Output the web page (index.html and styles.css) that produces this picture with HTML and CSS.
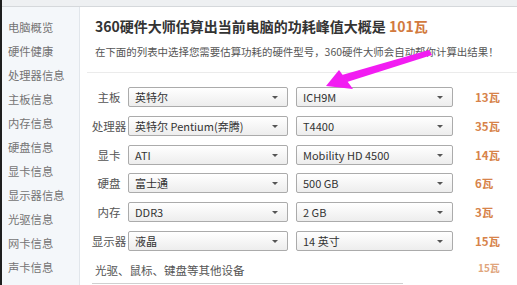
FILE: index.html
```html
<!DOCTYPE html>
<html lang="zh">
<head>
<meta charset="utf-8">
<link rel="stylesheet" href="styles.css">
</head>
<body>
<div class="frame">
  <div class="topbar"></div>
  <div class="layout">
    <ul class="sidebar">
      <li>电脑概览</li>
      <li>硬件健康</li>
      <li>处理器信息</li>
      <li>主板信息</li>
      <li>内存信息</li>
      <li>硬盘信息</li>
      <li>显卡信息</li>
      <li>显示器信息</li>
      <li>光驱信息</li>
      <li>网卡信息</li>
      <li>声卡信息</li>
    </ul>
    <main class="main">
      <header class="header">
        <h1 class="title">360硬件大师估算出当前电脑的功耗峰值大概是 <span class="hl">101瓦</span></h1>
        <p class="subtitle">在下面的列表中选择您需要估算功耗的硬件型号，360硬件大师会自动帮你计算出结果！</p>
      </header>
      <div class="rows">
        <div class="row"><span class="label">主板</span><div class="sel s1">英特尔<i class="caret"></i></div><div class="sel s2">ICH9M<i class="caret"></i></div><span class="val">13瓦</span></div>
        <div class="row"><span class="label">处理器</span><div class="sel s1">英特尔 Pentium(奔腾)<i class="caret"></i></div><div class="sel s2">T4400<i class="caret"></i></div><span class="val">35瓦</span></div>
        <div class="row"><span class="label">显卡</span><div class="sel s1">ATI<i class="caret"></i></div><div class="sel s2">Mobility HD 4500<i class="caret"></i></div><span class="val">14瓦</span></div>
        <div class="row"><span class="label">硬盘</span><div class="sel s1">富士通<i class="caret"></i></div><div class="sel s2">500 GB<i class="caret"></i></div><span class="val">6瓦</span></div>
        <div class="row"><span class="label">内存</span><div class="sel s1">DDR3<i class="caret"></i></div><div class="sel s2">2 GB<i class="caret"></i></div><span class="val">3瓦</span></div>
        <div class="row"><span class="label">显示器</span><div class="sel s1">液晶<i class="caret"></i></div><div class="sel s2">14 英寸<i class="caret"></i></div><span class="val">15瓦</span></div>
        <div class="row other"><span class="other-label">光驱、鼠标、键盘等其他设备</span><span class="val small">15瓦</span></div>
        <div class="inputline"></div>
      </div>
      <svg class="arrow" width="517" height="285" viewBox="0 0 517 285">
        <polygon points="429,50 432,55 347,82 342,75" fill="#f21cf2"/>
        <polygon points="326,86 339,70 353,89" fill="#f21cf2"/>
      </svg>
    </main>
  </div>
</div>
</body>
</html>
```
FILE: styles.css
```css
html, body {
  margin: 0;
  padding: 0;
}
body {
  width: 517px;
  height: 285px;
  overflow: hidden;
  background: #fff;
  font-family: "Noto Sans CJK SC", "Noto Sans", sans-serif;
}
.frame {
  height: 285px;
  border-left: 2px solid #1e1e1e;
  display: flex;
  flex-direction: column;
}
.topbar {
  height: 6px;
  background: #eef0f2;
  border-bottom: 1px solid #d5d8db;
  flex: none;
}
.layout {
  flex: 1;
  display: flex;
  min-height: 0;
}
.sidebar {
  list-style: none;
  margin: 0;
  padding: 8px 0 0 6px;
  width: 71px;
  background: #f4f7fa;
  border-right: 1px solid #e1e6eb;
  flex: none;
}
.sidebar li {
  height: 24px;
  line-height: 24px;
  font-size: 11.3px;
  color: #747474;
  white-space: nowrap;
}
.main {
  flex: 1;
  min-width: 0;
}
.header {
  margin-left: 7px;
  padding: 9px 0 12px 8px;
  border-bottom: 1px solid #ebebeb;
}
.title {
  margin: 0;
  font-size: 14px;
  line-height: 20px;
  font-weight: bold;
  color: #333;
  white-space: nowrap;
}
.hl {
  color: #d27a3e;
}
.subtitle {
  margin: 8px 0 0;
  font-size: 10.45px;
  line-height: 16px;
  color: #555;
  white-space: nowrap;
}
.rows {
  padding: 14px 0 0 10px;
  display: flex;
  flex-direction: column;
  gap: 8.8px;
}
.row {
  display: flex;
  align-items: center;
  height: 20px;
}
.label {
  width: 38px;
  text-align: center;
  font-size: 11.5px;
  color: #555;
  white-space: nowrap;
}
.sel {
  position: relative;
  box-sizing: border-box;
  height: 20px;
  line-height: 18px;
  border: 1px solid #ababab;
  border-radius: 2px;
  background: linear-gradient(#ffffff, #ededed);
  font-size: 11px;
  color: #333;
  padding-left: 6px;
  white-space: nowrap;
}
.s1 { width: 160px; }
.s2 { width: 157px; margin-left: 8px; }
.caret {
  position: absolute;
  right: 9px;
  top: 8px;
  width: 0;
  height: 0;
  border-left: 3px solid transparent;
  border-right: 3px solid transparent;
  border-top: 3px solid #555;
}
.val {
  margin-left: 22px;
  font-size: 11.5px;
  font-weight: bold;
  color: #d7834a;
  white-space: nowrap;
}
.other {
  height: 20px;
}
.other-label {
  width: 363px;
  padding-left: 5px;
  font-size: 11.5px;
  color: #555;
  white-space: nowrap;
}
.small {
  margin-left: 20px;
  font-size: 10px;
  color: #e0a57c;
  position: relative;
  top: -2px;
}
.inputline {
  margin-left: 2px;
  width: 311px;
  height: 4px;
  border-top: 1px solid #d0d0d0;
  margin-top: -6px;
}
.arrow {
  position: absolute;
  left: 0;
  top: 0;
  pointer-events: none;
}
```
